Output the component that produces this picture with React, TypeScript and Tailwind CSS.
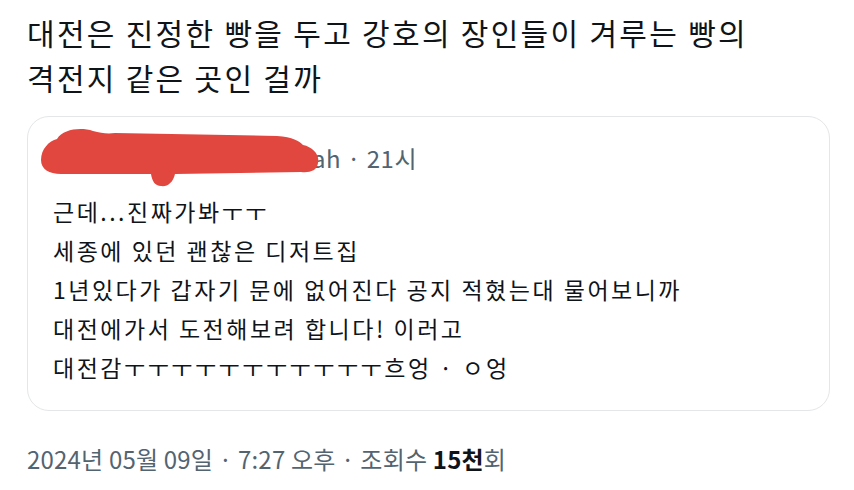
const font = { fontFamily: '"Noto Sans CJK KR", "Noto Sans", sans-serif' };

function Scribble() {
  return (
    <svg
      className="absolute left-[-12px] top-[-1px]"
      width="278"
      height="61"
      viewBox="0 0 278 61"
    >
      <path
        d="M0 33 C0 22 8 14 16 12 C22 2 40 0 52 4 C60 6 66 7 74 6 L236 9 C252 10 258 14 262 18 C272 20 279 28 277 36 C276 44 268 46 260 45 L134 47 C132 56 126 60 120 59 C114 59 111 54 110 47 L20 47 C8 47 0 42 0 33 Z"
        fill="#e2473f"
      />
    </svg>
  );
}

export default function App() {
  const lines = [
    "근데...진짜가봐ㅜㅜ",
    "세종에 있던 괜찮은 디저트집",
    "1년있다가 갑자기 문에 없어진다 공지 적혔는대 물어보니까",
    "대전에가서 도전해보려 합니다! 이러고",
    "대전감ㅜㅜㅜㅜㅜㅜㅜㅜㅜㅜㅜ흐엉 · ㅇ엉",
  ];

  return (
    <div className="w-[854px] h-[490px] bg-white overflow-hidden" style={font}>
      <div className="pl-[27px] pr-[26px] pt-[10px]">
        <p className="text-[30px] leading-[45px] tracking-[2.3px] text-[#0f1419] whitespace-nowrap">
          대전은 진정한 빵을 두고 강호의 장인들이 겨루는 빵의
          <br />
          격전지 같은 곳인 걸까
        </p>

        <div className="mt-[16px] w-[803px] h-[295px] rounded-[22px] border border-[#e4e6e8] px-[25px] pt-[11px]">
          <div className="relative h-[60px]">
            <span className="absolute left-[259px] top-0 text-[24px] leading-[60px] tracking-[0.5px] text-[#536471]">
              ah · 21시
            </span>
            <Scribble />
          </div>
          <div className="mt-[4px] flex flex-col text-[23px] leading-[39px] tracking-[2.5px] text-[#0f1419] whitespace-nowrap">
            {lines.map((l) => (
              <p key={l}>{l}</p>
            ))}
          </div>
        </div>

        <p className="mt-[30px] text-[24px] leading-[36px] tracking-[0.2px] text-[#536471]">
          2024년 05월 09일 · 7:27 오후 · 조회수{" "}
          <span className="font-bold text-[#0f1419]">15천</span>회
        </p>
      </div>
    </div>
  );
}
